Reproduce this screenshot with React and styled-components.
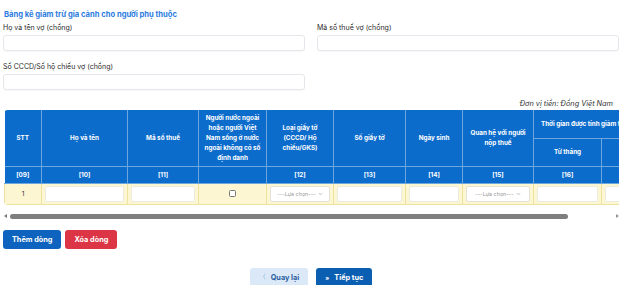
import React from 'react';
import styled, { createGlobalStyle } from 'styled-components';

const GlobalStyle = createGlobalStyle`
  * { box-sizing: border-box; }
  body {
    margin: 0;
    background: #fff;
    font-family: Inter, "Noto Sans", "Liberation Sans", sans-serif;
    color: #222;
  }
`;

const Page = styled.div`
  width: 624px;
  height: 285px;
  overflow: hidden;
  padding: 9px 5px 0 3px;
`;

const Title = styled.h3`
  margin: 0 0 0 1px;
  font-size: 7.6px;
  font-weight: 700;
  color: #2a7be0;
  line-height: 11px;
`;

const FormGrid = styled.div`
  display: grid;
  grid-template-columns: 302px 302px;
  column-gap: 12px;
  row-gap: 11px;
  margin-top: 3px;
`;

const Field = styled.div`
  display: flex;
  flex-direction: column;
  gap: 3px;
`;

const Label = styled.label`
  font-size: 7px;
  line-height: 9px;
  color: #2a2a2a;
`;

const TextInput = styled.div`
  height: 16px;
  border: 1px solid #e4e7eb;
  border-radius: 3px;
  background: #fff;
  box-shadow: 0 1px 1px rgba(0, 0, 0, 0.03);
`;

const Unit = styled.div`
  text-align: right;
  font-size: 7.3px;
  font-style: italic;
  color: #333;
  padding-right: 6px;
  margin-top: 9px;
  line-height: 10px;
`;

const TableWrap = styled.div`
  margin: 1px 0 0 1px;
  width: 615px;
  overflow: hidden;
  border-radius: 4px 0 0 4px;
`;

const Table = styled.table`
  border-collapse: collapse;
  table-layout: fixed;
  width: 665px;
`;

const Th = styled.th`
  background: #0c6ccc;
  color: #fff;
  font-size: 6.3px;
  font-weight: 700;
  line-height: 10px;
  text-align: ${(p) => p.$align || 'center'};
  vertical-align: middle;
  padding: 0 ${(p) => p.$pad ?? 3}px;
  height: ${(p) => p.$h || 28}px;
  white-space: ${(p) => (p.$nowrap ? 'nowrap' : 'normal')};
  border: 1px solid #6ea6e0;
  border-top: none;
  &:first-child { border-left: none; }
`;

const Td = styled.td`
  background: #fcf7d2;
  border: 1px solid #ede3a0;
  height: 21px;
  padding: 2px 3px;
  text-align: center;
  font-size: 6.5px;
  color: #333;
`;

const CellInput = styled.div`
  height: 16px;
  background: #fff;
  border: 1px solid #ecebe0;
  border-radius: 2px;
`;

const Select = styled.div`
  height: 16px;
  background: #fff;
  border: 1px solid #e4e2d6;
  border-radius: 2px;
  display: flex;
  align-items: center;
  justify-content: center;
  gap: 2px;
  font-size: 5.4px;
  color: #999;
`;

const Check = styled.span`
  display: inline-block;
  width: 7px;
  height: 7px;
  border: 1px solid #777;
  border-radius: 1.5px;
  background: #fff;
  vertical-align: middle;
`;

const ScrollBar = styled.div`
  display: flex;
  align-items: center;
  gap: 3px;
  width: 615px;
  margin: 8px 0 0 1px;
  height: 7px;
`;

const Arrow = styled.span`
  width: 0;
  height: 0;
  border-top: 2.5px solid transparent;
  border-bottom: 2.5px solid transparent;
  ${(p) => (p.$dir === 'left' ? 'border-right: 3px solid #777;' : 'border-left: 3px solid #999;')}
`;

const Track = styled.div`
  flex: 1;
  display: flex;
`;

const Thumb = styled.div`
  height: 5px;
  border-radius: 3px;
  background: #7f7f7f;
`;

const Actions = styled.div`
  display: flex;
  gap: 4px;
  margin-top: 10px;
`;

const Button = styled.button`
  height: 19px;
  padding: 0 ${(p) => p.$px || 8}px;
  border: none;
  border-radius: 3px;
  font-family: inherit;
  font-size: 7.3px;
  font-weight: 700;
  color: #fff;
  background: ${(p) => p.$bg};
  display: flex;
  align-items: center;
  gap: 5px;
`;

const Nav = styled.div`
  display: flex;
  justify-content: center;
  gap: 8px;
  margin-top: 19px;
`;

const BackButton = styled(Button)`
  background: #dbe8f8;
  color: #2c5f9e;
`;

const Chevron = () => (
  <svg width="5" height="4" viewBox="0 0 5 4">
    <path d="M0.8 1 L2.5 2.8 L4.2 1" fill="none" stroke="#aaa" strokeWidth="0.7" />
  </svg>
);

const columns = [37, 86, 71, 68, 67, 72, 57, 71, 68, 68];
const codes = ['[09]', '[10]', '[11]', '', '[12]', '[13]', '[14]', '[15]', '[16]', '[17]'];

const App = () => (
  <>
    <GlobalStyle />
    <Page>
      <Title>Bảng kê giảm trừ gia cảnh cho người phụ thuộc</Title>
      <FormGrid>
        <Field>
          <Label>Họ và tên vợ (chồng)</Label>
          <TextInput />
        </Field>
        <Field>
          <Label>Mã số thuế vợ (chồng)</Label>
          <TextInput />
        </Field>
        <Field>
          <Label>Số CCCD/Số hộ chiếu vợ (chồng)</Label>
          <TextInput />
        </Field>
      </FormGrid>

      <Unit>Đơn vị tiền: Đồng Việt Nam</Unit>

      <TableWrap>
        <Table>
          <colgroup>
            {columns.map((w, i) => (
              <col key={i} style={{ width: w }} />
            ))}
          </colgroup>
          <thead>
            <tr>
              <Th rowSpan={2}>STT</Th>
              <Th rowSpan={2}>Họ và tên</Th>
              <Th rowSpan={2}>Mã số thuế</Th>
              <Th rowSpan={2}>
                Người nước ngoài hoặc người Việt Nam sống ở nước ngoài không có số định danh
              </Th>
              <Th rowSpan={2} $pad={9}>Loại giấy tờ (CCCD/ Hộ chiếu/GKS)</Th>
              <Th rowSpan={2}>Số giấy tờ</Th>
              <Th rowSpan={2}>Ngày sinh</Th>
              <Th rowSpan={2} $pad={5}>Quan hệ với người nộp thuế</Th>
              <Th colSpan={2} $nowrap $align="left" $pad={7}>
                Thời gian được tính giảm trừ
              </Th>
            </tr>
            <tr>
              <Th>Từ tháng</Th>
              <Th>Đến tháng</Th>
            </tr>
            <tr>
              {codes.map((c, i) => (
                <Th key={i} $h={17}>{c}</Th>
              ))}
            </tr>
          </thead>
          <tbody>
            <tr>
              <Td>1</Td>
              <Td><CellInput /></Td>
              <Td><CellInput /></Td>
              <Td><Check /></Td>
              <Td><Select>---Lựa chọn---<Chevron /></Select></Td>
              <Td><CellInput /></Td>
              <Td><CellInput /></Td>
              <Td><Select>---Lựa chọn---<Chevron /></Select></Td>
              <Td><CellInput /></Td>
              <Td><CellInput /></Td>
            </tr>
          </tbody>
        </Table>
      </TableWrap>

      <ScrollBar>
        <Arrow $dir="left" />
        <Track>
          <Thumb style={{ width: `${(555 / 600) * 100}%` }} />
        </Track>
        <Arrow $dir="right" />
      </ScrollBar>

      <Actions>
        <Button $bg="#0d63bd" $px={9}>Thêm dòng</Button>
        <Button $bg="#dc3545" $px={9}>Xóa dòng</Button>
      </Actions>

      <Nav>
        <BackButton $px={9}>
          <span style={{ fontWeight: 400 }}>〈</span>Quay lại
        </BackButton>
        <Button $bg="#0b5fb3" $px={9}>
          <span style={{ fontSize: 6 }}>»</span>Tiếp tục
        </Button>
      </Nav>
    </Page>
  </>
);

export default App;
